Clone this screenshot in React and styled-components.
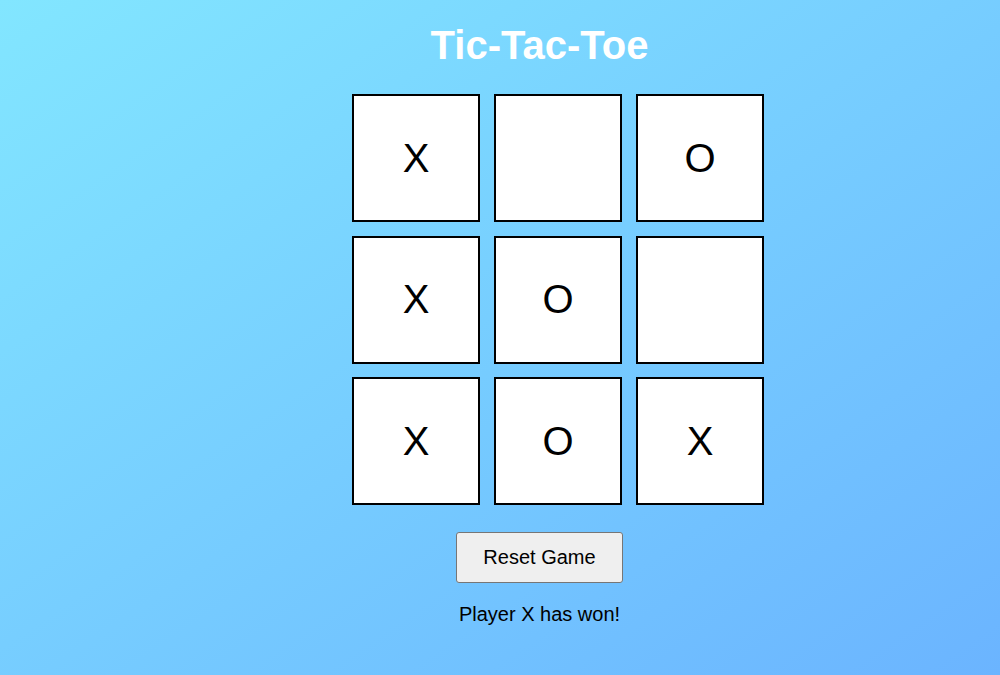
import { useState } from "react"
import styled, { createGlobalStyle } from "styled-components"

const GlobalStyle = createGlobalStyle`
html, body {
  margin: 0;
  padding: 0;
  height: 100%;
}
body {
  font-family: "Liberation Sans", Arial, sans-serif;
  background: linear-gradient(to bottom right, #82e6ff, #6bb4ff);
  min-height: 675px;
}
`

const startBoard = ["X", "", "O", "X", "O", "", "X", "O", "X"]

function App() {
  const [board, setBoard] = useState(startBoard)

  const reset = () => setBoard(Array(9).fill(""))

  return (
    <>
      <GlobalStyle />
      <Page>
        <Title>Tic-Tac-Toe</Title>
        <BoardWrap>
          <Board>
            {board.map((v, i) => (
              <Cell key={i}>{v}</Cell>
            ))}
          </Board>
        </BoardWrap>
        <ResetButton onClick={reset}>Reset Game</ResetButton>
        <Status>Player X has won!</Status>
      </Page>
    </>
  )
}

export default App

const Page = styled.div`
display: flex;
flex-direction: column;
align-items: center;
padding: 22px 0 0 79px;
`

const Title = styled.h1`
margin: 0 0 26px;
font-size: 40px;
font-weight: bold;
color: white;
line-height: 46px;
`

const BoardWrap = styled.div`
padding-left: 37px;
`

const Board = styled.div`
display: grid;
grid-template-columns: repeat(3, 128px);
grid-auto-rows: 128px;
column-gap: 14px;
row-gap: 13.5px;
`

const Cell = styled.div`
box-sizing: border-box;
background: white;
border: 2px solid black;
display: flex;
align-items: center;
justify-content: center;
font-size: 40px;
color: black;
`

const ResetButton = styled.button`
margin-top: 27px;
font-family: "Liberation Sans", Arial, sans-serif;
font-size: 20px;
padding: 13px 26px;
background: #efefef;
color: #000;
border: 1px solid #767676;
border-radius: 3px;
cursor: pointer;
line-height: 23px;
`

const Status = styled.p`
margin: 20px 0 0;
font-size: 20px;
line-height: 23px;
color: #000;
`
